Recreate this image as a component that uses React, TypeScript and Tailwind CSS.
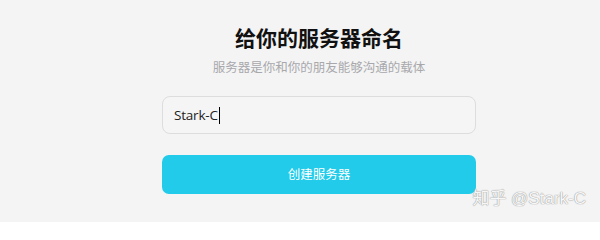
export default function App() {
  return (
    <div className="relative h-[222px] w-[600px] overflow-hidden bg-[#f4f4f4] font-['Noto_Sans_CJK_SC',sans-serif]">
      <div className="flex justify-center pl-[38px] pt-[22px]">
        <div className="flex w-[314px] flex-col items-center">
          <h1 className="text-[21px] leading-[30px] font-bold text-[#111]">给你的服务器命名</h1>
          <p className="mt-[5px] text-[12.5px] leading-[20px] text-[#a8a8ac]">
            服务器是你和你的朋友能够沟通的载体
          </p>

          <div className="mt-[19px] flex h-[38px] w-full items-center rounded-[8px] border border-[#dddddd] bg-[#f5f5f5] pl-[11px]">
            <span className="text-[13.5px] text-[#222] font-['Open_Sans',sans-serif] tracking-[-0.2px]">Stark-C</span>
            <span className="ml-[1px] h-[17px] w-[1px] bg-black" />
          </div>

          <button className="mt-[21px] flex h-[39px] w-full items-center justify-center rounded-[7px] bg-[#22cbea] text-[12.5px] text-white">
            创建服务器
          </button>
        </div>
      </div>

      {/* 水印 */}
      <div className="absolute right-[14px] top-[189px] text-[17px] leading-[20px] text-[#f7f7f7] [text-shadow:0_0_1px_#999,0_0_1px_#999] font-['Liberation_Sans','Noto_Sans_CJK_SC',sans-serif]">
        知乎 @Stark-C
      </div>
    </div>
  );
}
